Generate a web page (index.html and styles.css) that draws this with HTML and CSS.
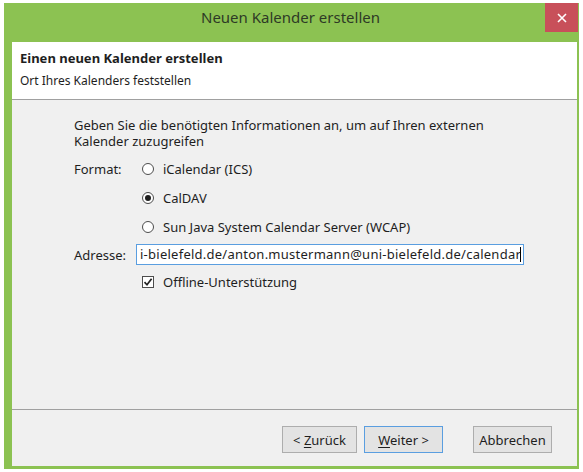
FILE: index.html
```html
<!DOCTYPE html>
<html lang="de">
<head>
<meta charset="utf-8">
<title>Neuen Kalender erstellen</title>
<link rel="stylesheet" href="styles.css">
</head>
<body>
<div class="window">
  <div class="titlebar">
    <span class="title">Neuen Kalender erstellen</span>
    <button class="close" aria-label="Schließen">
      <svg width="10" height="10" viewBox="0 0 10 10"><path d="M1 1L9 9M9 1L1 9" stroke="#fff" stroke-width="1.6"/></svg>
    </button>
  </div>
  <div class="frame">
    <div class="header">
      <div class="h-title">Einen neuen Kalender erstellen</div>
      <div class="h-sub">Ort Ihres Kalenders feststellen</div>
    </div>
    <div class="body">
      <p class="intro">Geben Sie die benötigten Informationen an, um auf Ihren externen Kalender zuzugreifen</p>
      <div class="row">
        <span class="label">Format:</span>
        <div class="options">
          <label class="opt"><span class="radio"></span>iCalendar (ICS)</label>
          <label class="opt"><span class="radio checked"></span>CalDAV</label>
          <label class="opt"><span class="radio"></span>Sun Java System Calendar Server (WCAP)</label>
        </div>
      </div>
      <div class="row addr">
        <span class="label">Adresse:</span>
        <div class="input">i-bielefeld.de/anton.mustermann@uni-bielefeld.de/calendar<span class="caret"></span></div>
      </div>
      <label class="check-row"><span class="check">
        <svg width="10" height="10" viewBox="0 0 10 10"><path d="M1.5 5.2L4 7.8L8.6 1.8" fill="none" stroke="#222" stroke-width="1.7"/></svg>
      </span>Offline-Unterstützung</label>
    </div>
    <div class="footer">
      <button class="btn"><span>&lt; <u>Z</u>urück</span></button>
      <button class="btn default"><span><u>W</u>eiter &gt;</span></button>
      <button class="btn cancel">Abbrechen</button>
    </div>
  </div>
</div>
</body>
</html>
```

FILE: styles.css
```css
html, body {
  margin: 0;
  background: #ffffff;
}

body {
  font-family: "Noto Sans", "Open Sans", sans-serif;
  font-size: 13px;
  color: #1e1e1e;
  padding: 3px 4px;
}

.window {
  width: 575px;
  height: 466px;
  background: #8cc252;
  box-sizing: border-box;
  padding: 0 2px 3px 8px;
  display: flex;
  flex-direction: column;
}

.titlebar {
  height: 39px;
  flex: none;
  display: flex;
  align-items: flex-start;
  justify-content: center;
  padding-top: 4px;
  box-sizing: border-box;
  position: relative;
}

.title {
  font-size: 15px;
  line-height: 20px;
  color: #2e3a26;
  margin-right: 8px;
}

.close {
  position: absolute;
  top: 0;
  right: -1px;
  width: 33px;
  height: 29px;
  border: none;
  background: #c8505a;
  padding: 0;
  display: flex;
  align-items: center;
  justify-content: center;
}

.frame {
  flex: 1;
  display: flex;
  flex-direction: column;
  background: #f0f0f0;
}

.header {
  background: #ffffff;
  height: 58px;
  box-sizing: border-box;
  padding: 7px 8px 0;
  border-bottom: 1px solid #a0a0a0;
  font-size: 12px;
}

.h-title {
  font-weight: bold;
  font-size: 13px;
  line-height: 18px;
}

.h-sub {
  line-height: 18px;
  margin-top: 5px;
}

.body {
  flex: 1;
  padding: 17px 0 0 62px;
}

.intro {
  margin: 0;
  width: 440px;
  line-height: 16px;
}

.row {
  display: flex;
  margin-top: 11px;
}

.label {
  width: 68px;
  flex: none;
  line-height: 18px;
}

.options {
  display: flex;
  flex-direction: column;
  gap: 11px;
}

.opt, .check-row {
  display: flex;
  align-items: center;
  line-height: 18px;
}

.radio {
  width: 12px;
  height: 12px;
  box-sizing: border-box;
  border: 1px solid #4d4d4d;
  border-radius: 50%;
  background: #ffffff;
  margin-right: 9px;
  display: flex;
  align-items: center;
  justify-content: center;
}

.radio.checked::after {
  content: "";
  width: 6px;
  height: 6px;
  border-radius: 50%;
  background: #1e1e1e;
}

.addr {
  margin-top: 8px;
  align-items: center;
}

.label + .input {
  margin-left: -6px;
}

.input {
  width: 388px;
  height: 21px;
  box-sizing: border-box;
  border: 1px solid #5a9ee0;
  background: #ffffff;
  padding: 0 3px;
  line-height: 19px;
  letter-spacing: 0.25px;
  white-space: nowrap;
  overflow: hidden;
}

.caret {
  display: inline-block;
  width: 1px;
  height: 15px;
  background: #000;
  vertical-align: -3px;
  margin-left: -1px;
}

.check-row {
  margin: 8px 0 0 68px;
}

.check {
  width: 12px;
  height: 12px;
  box-sizing: border-box;
  border: 1px solid #4d4d4d;
  background: #ffffff;
  margin-right: 9px;
  display: flex;
  align-items: center;
  justify-content: center;
}

.footer {
  height: 57px;
  flex: none;
  border-top: 1px solid #a0a0a0;
  display: flex;
  align-items: flex-start;
  padding: 16px 25px 0 0;
  box-sizing: border-box;
  justify-content: flex-end;
}

.btn {
  font: inherit;
  color: #1e1e1e;
  height: 27px;
  width: 75px;
  border: 1px solid #adadad;
  background: #e3e3e3;
  padding: 0;
  margin-left: 7px;
}

.btn.default {
  border-color: #5a9ee0;
  width: 79px;
}

.btn.cancel {
  margin-left: 30px;
  width: 79px;
}

u {
  text-decoration-thickness: 1px;
  text-underline-offset: 2px;
}
```
